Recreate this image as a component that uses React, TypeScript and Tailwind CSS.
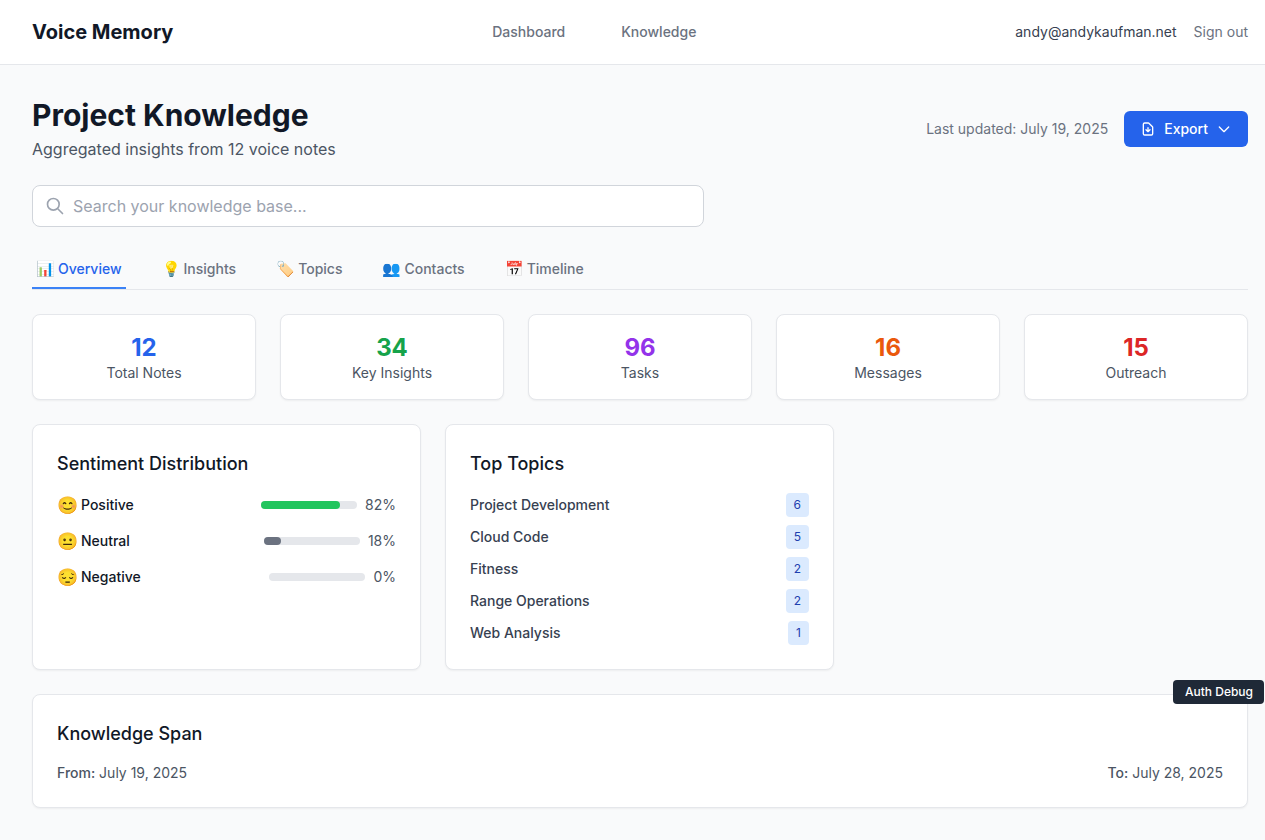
import { HiOutlineChevronDown, HiOutlineDocumentDownload, HiOutlineSearch } from "react-icons/hi";

const tabs = [
  { emoji: "📊", label: "Overview", active: true },
  { emoji: "💡", label: "Insights" },
  { emoji: "🏷️", label: "Topics" },
  { emoji: "👥", label: "Contacts" },
  { emoji: "📅", label: "Timeline" },
];

const stats = [
  { value: 12, label: "Total Notes", color: "text-[#2563eb]" },
  { value: 34, label: "Key Insights", color: "text-[#16a34a]" },
  { value: 96, label: "Tasks", color: "text-[#9333ea]" },
  { value: 16, label: "Messages", color: "text-[#ea580c]" },
  { value: 15, label: "Outreach", color: "text-[#dc2626]" },
];

const sentiments = [
  { emoji: "😊", label: "Positive", pct: 82, bar: "bg-[#22c55e]" },
  { emoji: "😐", label: "Neutral", pct: 18, bar: "bg-[#6b7280]" },
  { emoji: "😔", label: "Negative", pct: 0, bar: "bg-[#ef4444]" },
];

const topics = [
  { name: "Project Development", count: 6 },
  { name: "Cloud Code", count: 5 },
  { name: "Fitness", count: 2 },
  { name: "Range Operations", count: 2 },
  { name: "Web Analysis", count: 1 },
];

const cardClass = "rounded-lg border border-[#e5e7eb] bg-white shadow-[0_1px_2px_0_rgb(0_0_0/0.05)]";
const headingClass = "mb-4 h-7 text-lg leading-[30px] font-medium text-[#111827]";

const App = () => {
  return (
    <div className="relative h-[840px] w-[1265px] overflow-hidden bg-[#f9fafb] font-['Inter',sans-serif]">
      <nav className="flex h-[65px] items-center justify-between border-b border-[#e5e7eb] bg-white pl-8 pr-[17px]">
        <h1 className="text-xl font-bold text-[#111827]">Voice Memory</h1>
        <div className="flex gap-14 text-sm font-medium text-[#6b7280]">
          <span>Dashboard</span>
          <span>Knowledge</span>
        </div>
        <div className="flex items-center gap-[17px] text-sm">
          <span className="text-[#374151]">andy@andykaufman.net</span>
          <span className="text-[#6b7280]">Sign out</span>
        </div>
      </nav>

      <main className="pl-8 pr-[17px] pt-8">
        <div className="mb-6 flex items-center justify-between">
          <div>
            <h2 className="text-3xl font-bold text-[#111827]">Project Knowledge</h2>
            <p className="mt-1 text-base text-[#4b5563]">Aggregated insights from 12 voice notes</p>
          </div>
          <div className="flex items-center gap-4">
            <span className="text-sm text-[#6b7280]">Last updated: July 19, 2025</span>
            <button className="flex h-9 items-center rounded-md bg-[#2563eb] px-4 text-sm font-medium text-white">
              <HiOutlineDocumentDownload className="mr-2 h-4 w-4" />
              Export
              <HiOutlineChevronDown className="ml-2 h-4 w-4" />
            </button>
          </div>
        </div>

        <div className="mb-6 flex h-[42px] w-[672px] items-center rounded-lg border border-[#d1d5db] bg-white pl-3">
          <HiOutlineSearch className="h-5 w-5 text-[#9ca3af]" />
          <span className="ml-2 text-base text-[#9ca3af]">Search your knowledge base...</span>
        </div>

        <div className="mb-6 flex gap-8 border-b border-[#e5e7eb]">
          {tabs.map((tab) => (
            <div
              key={tab.label}
              className={`flex items-center border-b-2 px-1 py-2 text-sm font-medium ${tab.active ? "border-[#3b82f6] text-[#2563eb]" : "border-transparent text-[#6b7280]"}`}
            >
              <span className="mr-[4px] w-[18px] text-center text-[15px] leading-5">{tab.emoji}</span>
              {tab.label}
            </div>
          ))}
        </div>

        <div className="mb-6 grid grid-cols-5 gap-6">
          {stats.map((stat) => (
            <div key={stat.label} className={`${cardClass} p-4 text-center`}>
              <div className={`h-8 text-2xl leading-[34px] font-bold ${stat.color}`}>{stat.value}</div>
              <div className="text-sm text-[#4b5563]">{stat.label}</div>
            </div>
          ))}
        </div>

        <div className="mb-6 grid grid-cols-[389px_389px_1fr] gap-6">
          <div className={`${cardClass} p-6`}>
            <h3 className={headingClass}>Sentiment Distribution</h3>
            <div className="flex flex-col gap-3">
              {sentiments.map((s) => (
                <div key={s.label} className="flex h-6 items-center justify-between">
                  <span className="flex items-center text-sm font-medium text-[#111827]">
                    <span className="mr-1 w-5 text-left text-[17px] leading-6">{s.emoji}</span>
                    {s.label}
                  </span>
                  <div className="flex items-center gap-2">
                    <div className="h-2 w-24 rounded-full bg-[#e5e7eb]">
                      <div className={`h-2 rounded-full ${s.bar}`} style={{ width: `${s.pct}%` }} />
                    </div>
                    <span className="text-sm text-[#4b5563]">{s.pct}%</span>
                  </div>
                </div>
              ))}
            </div>
          </div>

          <div className={`${cardClass} p-6`}>
            <h3 className={headingClass}>Top Topics</h3>
            <div className="flex flex-col gap-2">
              {topics.map((t) => (
                <div key={t.name} className="flex h-6 items-center justify-between">
                  <span className="text-sm font-medium text-[#374151]">{t.name}</span>
                  <span className="rounded bg-[#dbeafe] px-2 py-1 text-xs text-[#1e40af]">{t.count}</span>
                </div>
              ))}
            </div>
          </div>
        </div>

        <div className={`${cardClass} p-6`}>
          <h3 className={headingClass}>Knowledge Span</h3>
          <div className="flex justify-between text-sm text-[#4b5563]">
            <span><span className="font-medium">From:</span> July 19, 2025</span>
            <span><span className="font-medium">To:</span> July 28, 2025</span>
          </div>
        </div>
      </main>

      <div className="absolute left-[1173px] top-[680px] w-[91px] whitespace-nowrap rounded bg-[#1f2937] py-1 pl-3 text-xs font-medium text-white">
        Auth Debug
      </div>
    </div>
  );
};

export default App;
